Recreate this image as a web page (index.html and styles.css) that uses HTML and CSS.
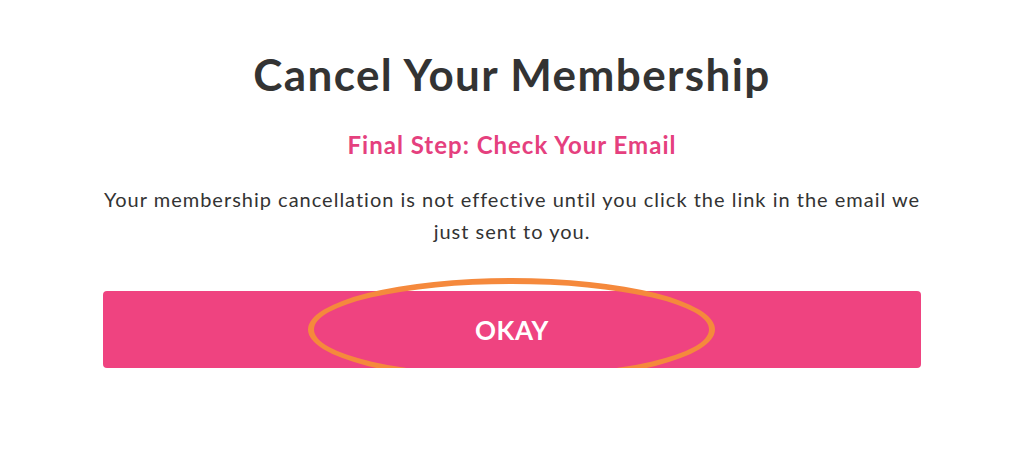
FILE: index.html
```html
<!DOCTYPE html>
<html lang="en">
<head>
<meta charset="utf-8">
<title>Cancel Your Membership</title>
<link rel="stylesheet" href="styles.css">
</head>
<body>
<main class="modal">
  <h1 class="title">Cancel Your Membership</h1>
  <h2 class="subtitle">Final Step: Check Your Email</h2>
  <p class="message">Your membership cancellation is not effective until you click the link in the email we just sent to you.</p>
  <div class="action">
    <button class="okay" type="button">OKAY</button>
    <span class="circle" aria-hidden="true"></span>
  </div>
</main>
</body>
</html>
```
FILE: styles.css
```css
html, body {
  margin: 0;
  padding: 0;
  background: #ffffff;
}
body {
  font-family: Lato, "Liberation Sans", sans-serif;
  color: #333333;
}
.modal {
  width: 818px;
  margin: 0 auto;
  padding-top: 46px;
  display: flex;
  flex-direction: column;
  align-items: center;
}
.title {
  margin: 0;
  font-size: 44px;
  font-weight: 700;
  line-height: 56px;
  color: #333333;
  letter-spacing: 1.4px;
}
.subtitle {
  margin: 28px 0 0;
  font-size: 24px;
  font-weight: 700;
  line-height: 30px;
  color: #e5407e;
  letter-spacing: 1px;
}
.message {
  margin: 23px 0 0;
  font-size: 20px;
  line-height: 32px;
  text-align: center;
  color: #333333;
  letter-spacing: 1px;
}
.action {
  position: relative;
  width: 100%;
  margin-top: 44px;
}
.okay {
  display: block;
  width: 100%;
  height: 77px;
  border: none;
  border-radius: 4px;
  background: #ef4380;
  color: #ffffff;
  font-family: Lato, "Liberation Sans", sans-serif;
  font-size: 26px;
  font-weight: 700;
  letter-spacing: 0.5px;
}
.circle {
  position: absolute;
  left: 205px;
  top: -13px;
  width: 407px;
  height: 103px;
  box-sizing: border-box;
  border: 6px solid #f5893c;
  border-radius: 50%;
  pointer-events: none;
}
```
